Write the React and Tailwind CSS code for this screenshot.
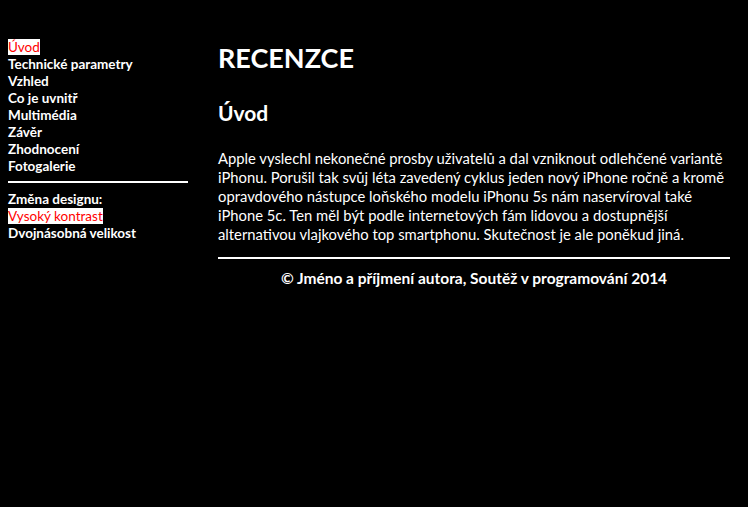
import React from 'react';

const navItems = [
  { label: 'Úvod', active: true },
  { label: 'Technické parametry' },
  { label: 'Vzhled' },
  { label: 'Co je uvnitř' },
  { label: 'Multimédia' },
  { label: 'Závěr' },
  { label: 'Zhodnocení' },
  { label: 'Fotogalerie' },
];

const designItems = [
  { label: 'Vysoký kontrast', active: true },
  { label: 'Dvojnásobná velikost' },
];

const NavLink = ({ label, active }) => (
  <li>
    <a
      href="#"
      className={
        active
          ? 'bg-white text-[#ff0000] font-normal'
          : 'text-white font-bold'
      }
    >
      {label}
    </a>
  </li>
);

const App = () => {
  return (
    <div className="bg-black min-h-[507px] w-full text-white font-['Lato',sans-serif]">
      <div className="flex pt-[37px]">
        {/* Sidebar */}
        <aside className="w-[180px] ml-2 mt-[2px] shrink-0 text-[13.5px] leading-[17px]">
          <ul>
            {navItems.map((item) => (
              <NavLink key={item.label} {...item} />
            ))}
          </ul>
          <hr className="border-0 h-[2px] bg-white mt-[6px] mb-[8px]" />
          <p className="font-bold">Změna designu:</p>
          <ul>
            {designItems.map((item) => (
              <NavLink key={item.label} {...item} />
            ))}
          </ul>
        </aside>

        {/* Content */}
        <main className="ml-[30px] w-[512px]">
          <h1 className="text-[27px] font-bold leading-[34px] mt-[4px]">RECENZCE</h1>
          <h2 className="text-[21px] font-bold leading-[26px] mt-[25px]">Úvod</h2>
          <p className="text-[14.8px] leading-[19px] mt-[23px]">
            Apple vyslechl nekonečné prosby uživatelů a dal vzniknout odlehčené variantě iPhonu. Porušil tak svůj léta zavedený cyklus jeden nový iPhone ročně a kromě opravdového nástupce loňského modelu iPhonu 5s nám naservíroval také iPhone 5c. Ten měl být podle internetových fám lidovou a dostupnější alternativou vlajkového top smartphonu. Skutečnost je ale poněkud jiná.
          </p>
          <hr className="border-0 h-[2px] bg-white mt-[13px]" />
          <p className="text-center font-bold text-[15.5px] leading-[19px] mt-[10px]">
            © Jméno a příjmení autora, Soutěž v programování 2014
          </p>
        </main>
      </div>
    </div>
  );
};

export default App;
